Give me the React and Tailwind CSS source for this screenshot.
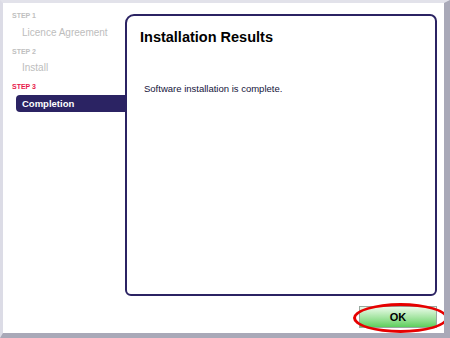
const App = () => {
  return (
    <div
      className="w-[450px] h-[338px] bg-white border-t-[3px] border-l-[3px] border-r-[6px] border-b-[5px] border-t-[#e2e2ea] border-l-[#dcdce6] border-r-[#a9a9b8] border-b-[#a9a9b8] flex flex-col overflow-hidden"
      style={{ fontFamily: '"Liberation Sans", Arial, sans-serif' }}
    >
      <div className="flex h-[293px] pt-[11px]">
        {/* Steps */}
        <div className="w-[122px] shrink-0 flex flex-col">
          <div className="h-[10px] leading-[10px] text-[7px] font-bold text-[#c0c0c0] pl-[9px] mt-[-3px]">
            STEP 1
          </div>
          <div className="h-[14px] leading-[14px] text-[10px] text-[#bdbdbd] pl-[19px] mt-[5px]">
            Licence Agreement
          </div>
          <div className="h-[10px] leading-[10px] text-[7px] font-bold text-[#c0c0c0] pl-[9px] mt-[7px]">
            STEP 2
          </div>
          <div className="h-[14px] leading-[14px] text-[10px] text-[#bdbdbd] pl-[19px] mt-[4px]">
            Install
          </div>
          <div className="h-[10px] leading-[10px] text-[7px] font-bold text-[#e8194b] pl-[9px] mt-[7px]">
            STEP 3
          </div>
          <div className="h-[17px] leading-[17px] text-[9.5px] font-bold text-white bg-[#2b2363] ml-[13px] pl-[6px] mt-[3px] rounded-l-[4px] -mr-[2px]">
            Completion
          </div>
        </div>

        {/* Results panel */}
        <div className="relative w-[312px] h-[282px] border-2 border-[#2b2363] rounded-tl-[9px] rounded-tr-[7px] rounded-b-[6px] bg-white flex flex-col">
          <div className="pl-[13px] pt-[12px] h-[18px] leading-[18px] text-[14.5px] font-bold text-black box-content">
            Installation Results
          </div>
          <div className="pl-[17px] mt-[37px] h-[12px] leading-[12px] text-[9.5px] text-[#14143a]">
            Software installation is complete.
          </div>
        </div>
      </div>

      {/* Footer */}
      <div className="relative flex-1 flex justify-end pr-[7px] pt-[10px]">
        <button className="w-[78px] h-[22px] border border-[#9aa8a0] bg-linear-to-b from-[#eafbea] to-[#5ccf5c] text-[11px] font-bold text-black leading-[20px]">
          OK
        </button>
        <div className="absolute left-[350px] top-[7px] w-[95px] h-[30px] border-[3px] border-[#e60000] rounded-[50%] pointer-events-none" />
      </div>
    </div>
  );
};

export default App;
